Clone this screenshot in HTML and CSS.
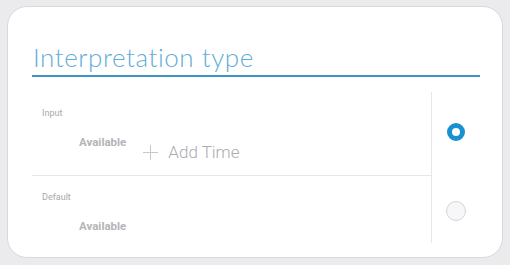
FILE: index.html
```html
<!DOCTYPE html>
<html>
<head>
<meta charset="utf-8">
<link rel="stylesheet" href="styles.css">
</head>
<body>
<div class="card">
  <div class="title">Interpretation type</div>
  <div class="rows">
    <div class="row first">
      <div class="cell">
        <div class="label">Input</div>
        <div class="line">
          <span class="avail">Available</span>
          <span class="add"><span class="plus"></span>Add Time</span>
        </div>
      </div>
      <div class="radio-cell"><span class="radio on"></span></div>
    </div>
    <div class="row second">
      <div class="cell">
        <div class="label">Default</div>
        <div class="line">
          <span class="avail">Available</span>
        </div>
      </div>
      <div class="radio-cell"><span class="radio"></span></div>
    </div>
  </div>
</div>
</body>
</html>
```
FILE: styles.css
```css
html, body { margin: 0; padding: 0; }
body {
  background: #ebebed;
  width: 510px;
  height: 265px;
  font-family: Roboto, "Liberation Sans", sans-serif;
  padding: 6px 0 0 7px;
  box-sizing: border-box;
}
.card {
  width: 496px;
  height: 252px;
  box-sizing: border-box;
  background: #fff;
  border: 1px solid #d9d9db;
  border-radius: 20px;
  padding: 35px 22px 0 24px;
}
.title {
  font-family: Lato, Roboto, sans-serif;
  font-weight: 300;
  font-size: 26px;
  color: #62acd5;
  line-height: 30px;
  padding-left: 1px;
  padding-bottom: 3px;
  border-bottom: 2px solid #3c95c6;
  letter-spacing: 0.55px;
}
.rows { margin-top: 15px; }
.row {
  display: grid;
  grid-template-columns: 399px 49px;
}
.row.first .cell { height: 84px; border-bottom: 1px solid #e7e7e9; }
.row.second .cell { height: 67px; }
.cell { padding: 16px 0 0 10px; box-sizing: border-box; }
.radio-cell {
  border-left: 1px solid #e7e7e9;
  display: flex;
  justify-content: center;
  box-sizing: border-box;
  padding-right: 1px;
}
.row.first .radio-cell { padding-top: 31px; }
.row.second .radio-cell { padding-top: 25px; }
.label {
  font-size: 9px;
  color: #a8a8ac;
  line-height: 11px;
}
.line {
  display: flex;
  align-items: flex-start;
  padding-left: 37px;
  margin-top: 16px;
}
.avail {
  font-size: 11.5px;
  font-weight: 700;
  color: #b4b4b8;
  line-height: 14px;
}
.add {
  display: flex;
  align-items: center;
  font-size: 17px;
  font-weight: 300;
  color: #ababaf;
  margin-left: 17px;
  margin-top: 7px;
  line-height: 20px;
}
.plus {
  position: relative;
  width: 15px;
  height: 15px;
  margin-right: 10px;
}
.plus::before, .plus::after {
  content: "";
  position: absolute;
  background: #c8c8cc;
}
.plus::before { left: 0; right: 0; top: 7px; height: 1px; }
.plus::after { top: 0; bottom: 0; left: 7px; width: 1px; }
.radio {
  width: 20px;
  height: 20px;
  border-radius: 50%;
  box-sizing: border-box;
  border: 1px solid #d4d4da;
  background: #f7f7f9;
}
.radio.on {
  width: 18px;
  height: 18px;
  border: 5px solid #1a8fd1;
  background: #fff;
}
```
